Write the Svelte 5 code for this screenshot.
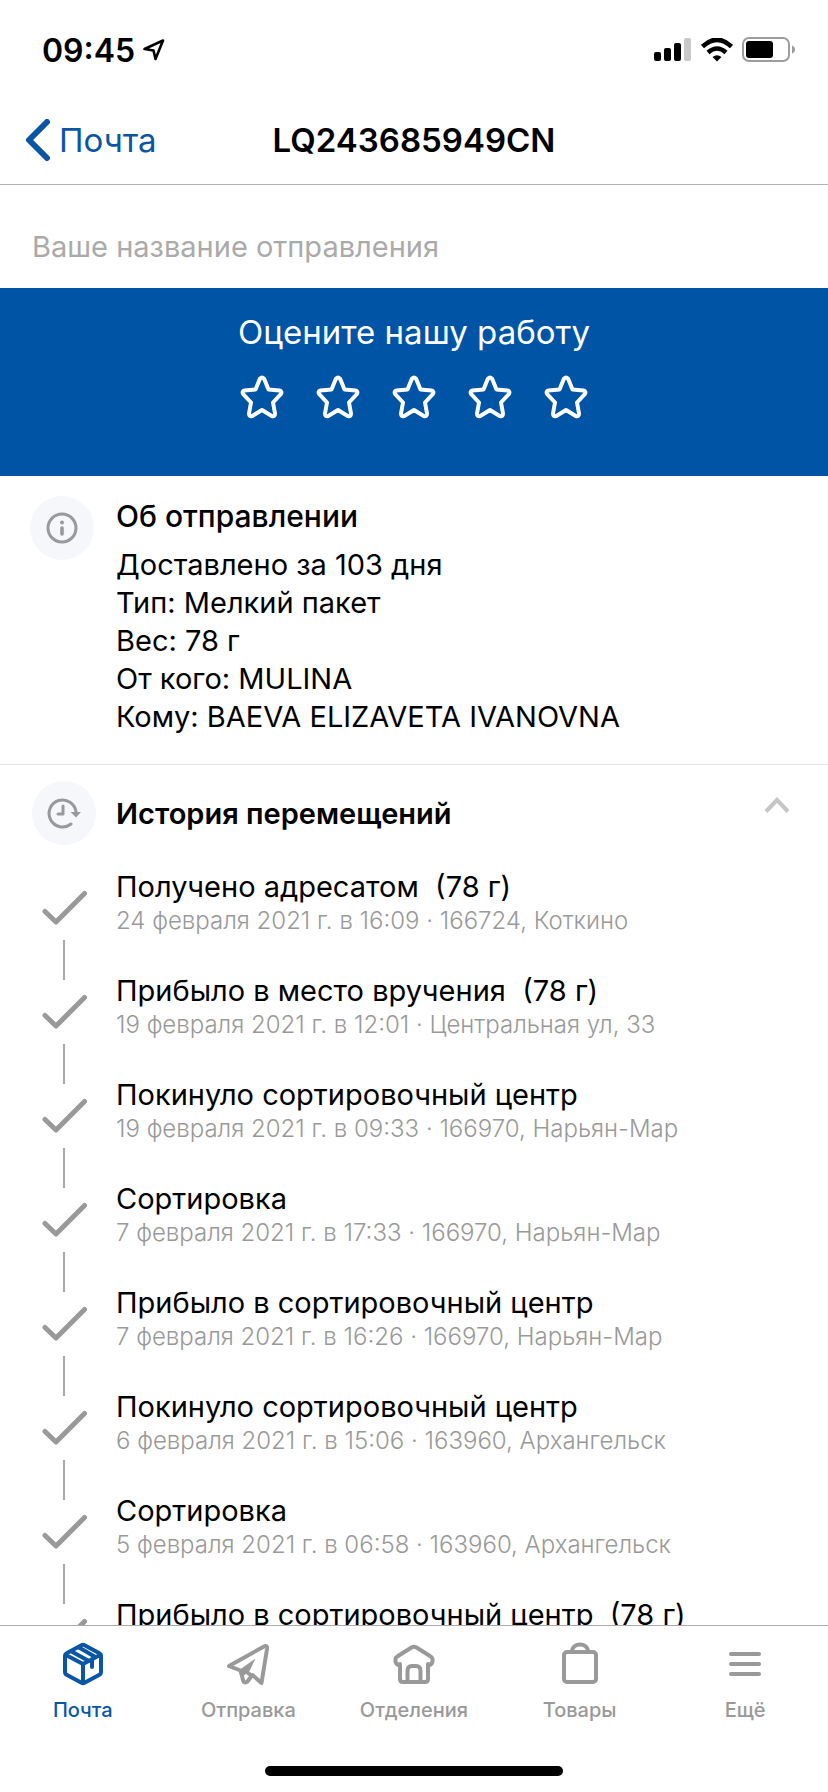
<script>
  let shipmentName = $state('');
  let rating = $state(0);
  let historyOpen = $state(true);
  let activeTab = $state('mail');

  const stars = [1, 2, 3, 4, 5];

  const details = [
    'Доставлено за 103 дня',
    'Тип: Мелкий пакет',
    'Вес: 78 г',
    'От кого: MULINA',
    'Кому: BAEVA ELIZAVETA IVANOVNA'
  ];

  const events = [
    { title: 'Получено адресатом', weight: '(78 г)', info: '24 февраля 2021 г. в 16:09 · 166724, Коткино' },
    { title: 'Прибыло в место вручения', weight: '(78 г)', info: '19 февраля 2021 г. в 12:01 · Центральная ул, 33' },
    { title: 'Покинуло сортировочный центр', info: '19 февраля 2021 г. в 09:33 · 166970, Нарьян-Мар' },
    { title: 'Сортировка', info: '7 февраля 2021 г. в 17:33 · 166970, Нарьян-Мар' },
    { title: 'Прибыло в сортировочный центр', info: '7 февраля 2021 г. в 16:26 · 166970, Нарьян-Мар' },
    { title: 'Покинуло сортировочный центр', info: '6 февраля 2021 г. в 15:06 · 163960, Архангельск' },
    { title: 'Сортировка', info: '5 февраля 2021 г. в 06:58 · 163960, Архангельск' },
    { title: 'Прибыло в сортировочный центр', weight: '(78 г)' }
  ];

  const tabs = [
    { id: 'mail', label: 'Почта' },
    { id: 'send', label: 'Отправка' },
    { id: 'offices', label: 'Отделения' },
    { id: 'goods', label: 'Товары' },
    { id: 'more', label: 'Ещё' }
  ];
</script>

{#snippet tabIcon(id)}
  <svg class="tab-icon" viewBox="0 0 44 44" aria-hidden="true">
    {#if id === 'mail'}
      <path d="M20 3.500Q22 2 24 3.500L38 11Q40 12 40 14V30Q40 32 38 33L24 40.500Q22 42 20 40.500L6 33Q4 32 4 30V14Q4 12 6 11Z" />
      <path d="M5 13 22 22 39 13M22 22V40M10.500 9.500 27 18.500M18 5.500 33.500 14.500M31 17V25" />
    {:else if id === 'send'}
      <path d="M3 24 38 4.500Q41.500 3 41 7L35.500 41 26.500 33 21 40Q17.500 41.500 17 38L14.500 28.500Z" />
      <path class="solid" d="M14 27.500 29.500 16.500 23.500 29 17.500 34Z" />
      <path d="M19.500 29 26 34" />
    {:else if id === 'offices'}
      <path d="M8 23C4 23 3 20 3.500 17Q4 15 6 14L19.500 5.500Q22 4 24.500 5.500L38 14Q40 15 40.500 17C41 20 40 23 36 23M8 22V37Q8 40 11 40H33Q36 40 36 37V22" />
      <path d="M15.500 39V29Q15.500 24 20 24H24Q28.500 24 28.500 29V39" />
    {:else if id === 'goods'}
      <rect x="6" y="10" width="32" height="30" rx="3" />
      <path d="M14 10C14 0 30 0 30 10" />
    {:else}
      <path d="M8 12H36M8 22H36M8 32H36" />
    {/if}
  </svg>
{/snippet}

<div class="app">
  <div class="status">
    <div class="status-left">
      <time>09:45</time>
      <svg width="22" height="22" viewBox="0 0 22 22" aria-hidden="true">
        <path d="M1.500 10 20 1.500 12.500 20 10.500 11.500Z" fill="none" stroke="#000" stroke-width="2.600" stroke-linejoin="round" />
      </svg>
    </div>
    <div class="status-right">
      <svg width="38" height="24" viewBox="0 0 38 24" aria-hidden="true">
        <rect x="0" y="14" width="7" height="9" rx="2" />
        <rect x="10" y="10" width="7" height="13" rx="2" />
        <rect x="20" y="5" width="7" height="18" rx="2" />
        <rect x="30" y="0" width="7" height="23" rx="2" fill="#c9c9c9" />
      </svg>
      <svg width="32" height="24" viewBox="0 0 32 24" aria-hidden="true">
        <path d="M1.500 8.500Q16-5 30.500 8.500" fill="none" stroke="#000" stroke-width="4.600" />
        <path d="M7 14.500Q16 6.500 25 14.500" fill="none" stroke="#000" stroke-width="4.400" />
        <path d="M11.500 19Q16 15.500 20.500 19L16 23.500Z" />
      </svg>
      <svg width="54" height="26" viewBox="0 0 54 26" aria-hidden="true">
        <rect x="1" y="1" width="46" height="23" rx="6" fill="none" stroke="#9d9d9d" stroke-width="2" />
        <rect x="4" y="4" width="27" height="17" rx="3" />
        <path d="M50 8.500Q53 9.500 53 12.500T50 16.500Z" fill="#9d9d9d" />
      </svg>
    </div>
  </div>

  <header class="nav">
    <a class="back" href="#mail">
      <svg width="26" height="42" viewBox="0 0 26 42" aria-hidden="true">
        <path d="M22 3 4 21 22 39" fill="none" stroke="currentColor" stroke-width="6" stroke-linecap="round" stroke-linejoin="round" />
      </svg>
      <span>Почта</span>
    </a>
    <h1>LQ243685949CN</h1>
  </header>

  <main>
    <input class="name-input" type="text" aria-label="Ваше название отправления" placeholder="Ваше название отправления" bind:value={shipmentName} />

    <section class="rate">
      <h2>Оцените нашу работу</h2>
      <div class="stars">
        {#each stars as n}
          <button type="button" class:filled={n <= rating} aria-label={`Оценка ${n}`} onclick={() => (rating = n)}>
            <svg viewBox="0 0 44 44" aria-hidden="true">
              <path d="M20 3.600Q22 1.600 24 3.600L28.500 14.500 39.500 15.500Q42.500 16.500 40.800 19.200L33 27.500 35 38.500Q35 42 31.700 41L22 35 12.300 41Q9 42 9 38.500L11 27.500 3.200 19.200Q1.500 16.500 4.500 15.500L15.500 14.500Z" />
            </svg>
          </button>
        {/each}
      </div>
    </section>

    <section class="about">
      <span class="badge">
        <svg width="32" height="32" viewBox="0 0 32 32" aria-hidden="true">
          <circle cx="16" cy="16" r="14" />
          <path d="M16 16V22" stroke-width="3.600" />
          <circle class="dot" cx="16" cy="10.500" r="2" />
        </svg>
      </span>
      <div class="about-text">
        <h2>Об отправлении</h2>
        {#each details as line}
          <p>{line}</p>
        {/each}
      </div>
    </section>

    <section class="history">
      <button type="button" class="history-head" aria-expanded={historyOpen} onclick={() => (historyOpen = !historyOpen)}>
        <span class="badge">
          <svg width="34" height="32" viewBox="0 0 34 32" aria-hidden="true">
            <path d="M24 27A13.500 13.500 0 1 1 29 15" />
            <path d="M16 9V17H11" />
            <path class="dot" d="M23.500 15H34L29 20.500Z" />
          </svg>
        </span>
        <span class="history-title">История перемещений</span>
        <svg class="chevron" class:closed={!historyOpen} width="26" height="18" viewBox="0 0 26 18" aria-hidden="true">
          <path d="M2 15.500 13 4 24 15.500" fill="none" stroke="#c6c6c6" stroke-width="4" />
        </svg>
      </button>

      {#if historyOpen}
        <ol>
          {#each events as ev}
            <li>
              <div class="track">
                <svg width="46" height="36" viewBox="0 0 46 36" aria-hidden="true">
                  <path d="M4 21.500 15 32 43.500 3.500" fill="none" stroke="#999" stroke-width="5" stroke-linecap="round" stroke-linejoin="round" />
                </svg>
                <span class="line"></span>
              </div>
              <div class="event">
                <h3>
                  {ev.title}{#if ev.weight}<span>&nbsp; {ev.weight}</span>{/if}
                </h3>
                {#if ev.info}<p>{ev.info}</p>{/if}
              </div>
            </li>
          {/each}
        </ol>
      {/if}
    </section>
  </main>

  <footer>
    <nav class="tabs">
      {#each tabs as tab}
        <button type="button" class:active={activeTab === tab.id} onclick={() => (activeTab = tab.id)}>
          {@render tabIcon(tab.id)}
          <span>{tab.label}</span>
        </button>
      {/each}
    </nav>
    <div class="home-bar"></div>
  </footer>
</div>

<style>
  :global(body) { background: #fff; }

  .app {
    display: flex;
    flex-direction: column;
    height: 100vh;
    overflow: hidden;
    background: #fff;
    color: #000;
    font-family: Inter, "Noto Sans", sans-serif;
  }
  h1, h2, h3, p, ol { margin: 0; padding: 0; font-weight: 400; }
  ol { list-style: none; }
  button { padding: 0; border: 0; background: none; color: inherit; font: inherit; cursor: pointer; }
  svg { display: block; flex-shrink: 0; }

  .status {
    display: flex;
    flex-shrink: 0;
    align-items: center;
    justify-content: space-between;
    height: 96px;
    padding: 4px 32px 0 42px;
    box-sizing: border-box;
  }
  .status-left { display: flex; align-items: center; gap: 8px; }
  .status-left time { font-size: 32px; font-weight: 600; }
  .status-right { display: flex; align-items: center; gap: 9px; }

  .nav {
    display: grid;
    grid-template-columns: 1fr auto 1fr;
    flex-shrink: 0;
    align-items: center;
    height: 88px;
    border-bottom: 1px solid #b2b2b2;
  }
  .nav h1 { font-size: 33px; font-weight: 600; }
  .back {
    display: flex;
    align-items: center;
    gap: 8px;
    padding-left: 25px;
    color: #0b55a5;
    font-size: 33px;
    text-decoration: none;
  }

  main {
    flex: 1;
    min-height: 0;
    overflow-y: auto;
    scrollbar-width: none;
  }

  .name-input {
    display: block;
    width: 100%;
    height: 103px;
    padding: 20px 32px 0;
    box-sizing: border-box;
    border: 0;
    outline: 0;
    background: none;
    color: #000;
    font: 400 29px Inter, "Noto Sans", sans-serif;
  }
  .name-input::placeholder { color: #aaa; opacity: 1; }

  .rate {
    height: 188px;
    padding-top: 24px;
    box-sizing: border-box;
    background: #0054a6;
    color: #fff;
    text-align: center;
  }
  .rate h2 { font-size: 33px; line-height: 40px; }
  .stars { display: flex; justify-content: center; gap: 32px; margin-top: 23px; }
  .stars svg { width: 44px; height: 44px; }
  .stars path { fill: none; stroke: #fff; stroke-width: 4; stroke-linejoin: round; }
  .stars .filled path { fill: #fff; }

  .badge {
    display: flex;
    flex-shrink: 0;
    align-items: center;
    justify-content: center;
    width: 64px;
    height: 64px;
    border-radius: 50%;
    background: #f6f7fb;
  }
  .badge svg {
    fill: none;
    stroke: #98989d;
    stroke-width: 3;
    stroke-linecap: round;
    stroke-linejoin: round;
  }
  .badge .dot { fill: #98989d; stroke: none; }

  .about {
    display: flex;
    gap: 22px;
    padding: 20px 30px 28px;
    border-bottom: 1px solid #e3e3e3;
  }
  .about h2 { margin-bottom: 10px; font-size: 30px; font-weight: 500; line-height: 40px; }
  .about p { font-size: 29px; line-height: 38px; }

  .history-head {
    display: flex;
    align-items: center;
    gap: 20px;
    width: 100%;
    padding: 16px 38px 0 32px;
    text-align: left;
  }
  .history-title { flex: 1; font-size: 29px; font-weight: 600; }
  .chevron { margin-bottom: 16px; }
  .chevron.closed { transform: rotate(180deg); }

  ol { padding-top: 23px; }
  li { display: flex; gap: 20px; height: 104px; padding: 0 32px; }
  .track {
    display: flex;
    flex-direction: column;
    align-items: center;
    gap: 14px;
    width: 64px;
    padding-top: 22px;
  }
  .line { flex-shrink: 0; width: 2px; height: 40px; background: #aaa; }
  .event h3 { font-size: 29px; line-height: 38px; }
  .event p { color: #999; font-size: 24px; font-weight: 300; line-height: 30px; }

  footer {
    display: flex;
    flex-direction: column;
    flex-shrink: 0;
    align-items: center;
    justify-content: space-between;
    height: 167px;
    padding-bottom: 16px;
    box-sizing: border-box;
    border-top: 1px solid #aaa;
    background: #fff;
  }
  .tabs { display: flex; width: 100%; }
  .tabs button {
    display: flex;
    flex: 1;
    flex-direction: column;
    align-items: center;
    gap: 10px;
    padding-top: 16px;
    color: #999;
    font-size: 20px;
    font-weight: 500;
    line-height: 28px;
  }
  .tabs .active { color: #0b55a5; }
  .tab-icon {
    width: 44px;
    height: 44px;
    fill: none;
    stroke: currentColor;
    stroke-width: 4;
    stroke-linecap: round;
    stroke-linejoin: round;
  }
  .tab-icon .solid { fill: currentColor; stroke: none; }
  .home-bar { width: 36%; height: 10px; border-radius: 5px; background: #000; }
</style>
